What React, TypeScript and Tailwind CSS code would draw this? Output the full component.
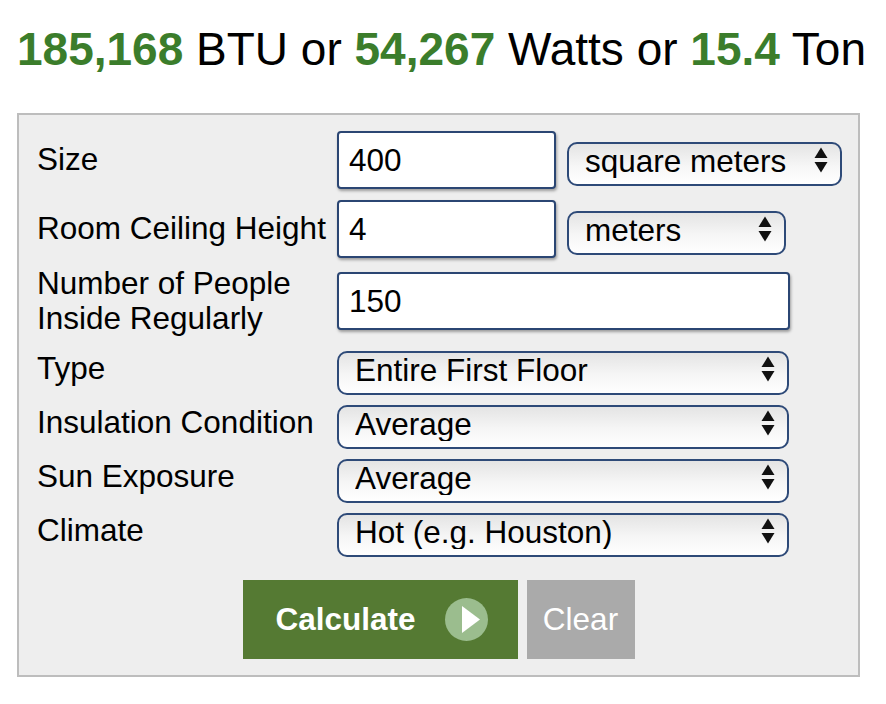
import React from 'react';

const font = { fontFamily: '"Liberation Sans", Arial, sans-serif' };

const Arrows: React.FC = () => (
  <svg width="14" height="26" viewBox="0 0 14 26" className="pointer-events-none">
    <path d="M7 0.5 L13.5 11 H0.5 Z" fill="#111" />
    <path d="M7 25.5 L13.5 15 H0.5 Z" fill="#111" />
  </svg>
);

const Select: React.FC<{ value: string; className: string }> = ({ value, className }) => (
  <div className={`relative h-[44px] ${className}`}>
    <select
      defaultValue={value}
      className="appearance-none w-full h-full rounded-[10px] border-2 border-[#2e4a78] bg-[linear-gradient(to_bottom,#e4e4e4,#f6f6f6_55%,#ffffff)] pl-[16px] pr-[40px] pt-0 pb-[5px] text-[31.5px] leading-[34px] text-black outline-none"
      style={font}
    >
      <option>{value}</option>
    </select>
    <div className="absolute right-[14px] top-[9px]">
      <Arrows />
    </div>
  </div>
);

const TextInput: React.FC<{ value: string; className: string }> = ({ value, className }) => (
  <input
    type="text"
    defaultValue={value}
    className={`h-[58px] rounded-[4px] border-2 border-[#2b4673] bg-white pl-[10px] text-[31.5px] text-black outline-none shadow-[1px_2px_3px_rgba(0,0,0,0.35)] ${className}`}
    style={font}
  />
);

const App: React.FC = () => {
  return (
    <div className="min-h-screen bg-white pl-[17px] pt-[26px] text-black" style={font}>
      {/* Result line */}
      <h1 className="h-[46px] text-[46px] leading-none font-normal whitespace-nowrap">
        <span className="font-bold text-[#3b7d2b]">185,168</span> BTU or{' '}
        <span className="font-bold text-[#3b7d2b]">54,267</span> Watts or{' '}
        <span className="font-bold text-[#3b7d2b]">15.4</span> Ton
      </h1>

      {/* Calculator panel */}
      <form className="mt-[41px] w-[843px] border-2 border-[#bdbdbd] bg-[#eeeeee] pl-[18px] pt-[16px] pb-[16px] text-[31.5px]">
        <div className="flex items-center h-[58px]">
          <label className="w-[300px] shrink-0">Size</label>
          <TextInput value="400" className="w-[219px]" />
          <Select value="square meters" className="ml-[11px] w-[275px]" />
        </div>

        <div className="flex items-center h-[58px] mt-[11px]">
          <label className="w-[300px] shrink-0 whitespace-nowrap">Room Ceiling Height</label>
          <TextInput value="4" className="w-[219px]" />
          <Select value="meters" className="ml-[11px] w-[219px]" />
        </div>

        <div className="flex items-center h-[70px] mt-[8px]">
          <label className="w-[300px] shrink-0 leading-[35px]">
            Number of People
            <br />
            Inside Regularly
          </label>
          <TextInput value="150" className="w-[453px]" />
        </div>

        <div className="flex items-center h-[44px] mt-[11px]">
          <label className="w-[300px] shrink-0">Type</label>
          <Select value="Entire First Floor" className="w-[452px]" />
        </div>

        <div className="flex items-center h-[44px] mt-[10px]">
          <label className="w-[300px] shrink-0">Insulation Condition</label>
          <Select value="Average" className="w-[452px]" />
        </div>

        <div className="flex items-center h-[44px] mt-[10px]">
          <label className="w-[300px] shrink-0">Sun Exposure</label>
          <Select value="Average" className="w-[452px]" />
        </div>

        <div className="flex items-center h-[44px] mt-[10px]">
          <label className="w-[300px] shrink-0">Climate</label>
          <Select value="Hot (e.g. Houston)" className="w-[452px]" />
        </div>

        {/* Buttons */}
        <div className="flex justify-center gap-[9px] mt-[27px] pr-[18px]">
          <button
            type="button"
            className="flex items-center h-[79px] w-[275px] bg-[#557a33] pl-[33px] text-white font-bold"
          >
            Calculate
            <span className="ml-[29px] flex items-center justify-center w-[43px] h-[43px] rounded-full bg-[#9bbd8e]">
              <svg width="43" height="43" viewBox="0 0 43 43" className="shrink-0">
                <path d="M17 8 L35 21.5 L17 35 Z" fill="#ffffff" />
              </svg>
            </span>
          </button>
          <button type="button" className="h-[79px] w-[108px] bg-[#aaaaaa] text-white">
            Clear
          </button>
        </div>
      </form>
    </div>
  );
};

export default App;
